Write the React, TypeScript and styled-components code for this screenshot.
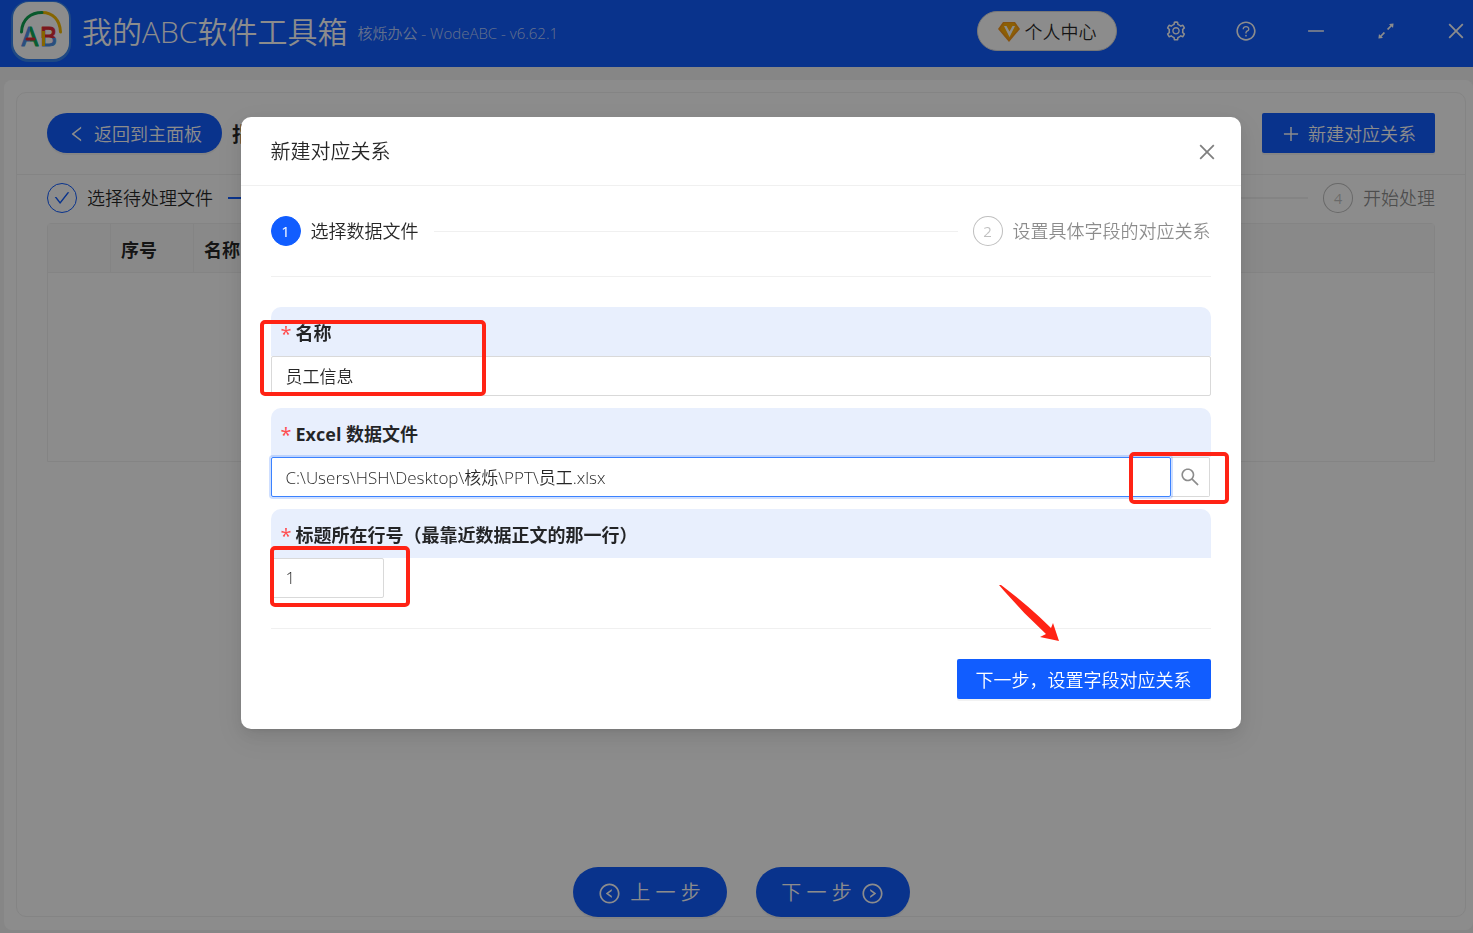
import React from "react";
import styled, { createGlobalStyle, css } from "styled-components";
import {
  AiOutlineArrowsAlt,
  AiOutlineCheck,
  AiOutlineClose,
  AiOutlineLeft,
  AiOutlineLeftCircle,
  AiOutlineMinus,
  AiOutlinePlus,
  AiOutlineQuestionCircle,
  AiOutlineRightCircle,
  AiOutlineSearch,
  AiOutlineSetting,
} from "react-icons/ai";

const primary = "#115dff";
const line = "#f0f0f0";
const annotation = "#ff2315";

const GlobalStyle = createGlobalStyle`
  *, *::before, *::after { box-sizing: border-box; }
  body {
    margin: 0;
    background: #f5f5f5;
    color: rgba(0, 0, 0, 0.85);
    font-family: "Open Sans", "Noto Sans CJK SC", sans-serif;
    font-weight: 350;
    font-size: 18px;
    line-height: 28px;
  }
  button, input { font: inherit; color: inherit; }
  button { cursor: pointer; }
  h1, h2, p { margin: 0; font-weight: inherit; }
  svg { display: block; flex: none; }
`;

const Page = styled.div`
  display: flex;
  flex-direction: column;
  min-height: 100vh;
`;

const TitleBar = styled.header`
  display: flex;
  align-items: center;
  height: 67px;
  padding: 0 6px 5px 11px;
  background: ${primary};
  color: #fff;
`;

const AppName = styled.h1`
  margin-left: 10px;
  padding-top: 2px;
  font-size: 30px;
  line-height: 40px;
  white-space: nowrap;
`;

const Version = styled.span`
  margin: 4px 0 0 10px;
  font-size: 15px;
  line-height: 24px;
  color: rgba(255, 255, 255, 0.7);
  white-space: nowrap;
`;

const WindowTools = styled.div`
  display: flex;
  align-items: center;
  gap: 48px;
  margin-left: auto;
`;

const IconButton = styled.button`
  display: flex;
  padding: 0;
  border: 0;
  background: none;
  font-size: 22px;
`;

const AccountButton = styled.button`
  display: flex;
  align-items: center;
  justify-content: center;
  gap: 5px;
  width: 140px;
  height: 40px;
  padding: 2px 0 0;
  border: 1px solid #d9d9d9;
  border-radius: 20px;
  background: #fff;
  color: rgba(0, 0, 0, 0.85);
`;

const Workspace = styled.main`
  flex: 1;
  display: flex;
  margin: 13px 0 3px 4px;
  padding: 12px 7px 13px 12px;
  border-radius: 8px;
  background: #fff;
`;

const Card = styled.section`
  flex: 1;
  display: flex;
  flex-direction: column;
  min-width: 0;
  border: 1px solid ${line};
  border-radius: 10px;
`;

const CardHeader = styled.div`
  display: flex;
  align-items: center;
  gap: 10px;
  padding: 20px 30px 21px;
  border-bottom: 1px solid ${line};
`;

const PageTitle = styled.h2`
  flex: 1;
  padding-top: 4px;
  font-weight: 700;
  font-size: 20px;
`;

const Button = styled.button<{ $shape?: "pill" | "large" }>`
  display: inline-flex;
  align-items: center;
  justify-content: center;
  gap: 7px;
  height: 40px;
  padding: 2px 19px 0;
  border: 0;
  border-radius: 2px;
  background: ${primary};
  color: #fff;
  box-shadow: 0 2px 0 rgba(0, 0, 0, 0.05);
  white-space: nowrap;
  svg { font-size: 20px; }
  ${({ $shape }) =>
    $shape &&
    css`
      padding: 2px 20px 0;
      border-radius: 25px;
    `}
  ${({ $shape }) =>
    $shape === "large" &&
    css`
      width: 154px;
      height: 50px;
      font-size: 20px;
      gap: 9px;
      svg { font-size: 23px; }
    `}
`;

const StepRow = styled.ol<{ $compact?: boolean }>`
  display: flex;
  align-items: center;
  gap: 15px;
  margin: 0;
  padding: ${({ $compact }) => ($compact ? "8px 30px 10px" : "0 0 30px")};
  list-style: none;
  ${({ $compact }) => !$compact && css`border-bottom: 1px solid ${line};`}
`;

const StepItem = styled.li<{ $waiting?: boolean }>`
  display: flex;
  align-items: center;
  gap: 10px;
  white-space: nowrap;
  color: ${({ $waiting }) => ($waiting ? "rgba(0,0,0,0.45)" : "rgba(0,0,0,0.85)")};
`;

const StepMark = styled.span<{ $state: "done" | "active" | "wait" }>`
  display: flex;
  align-items: center;
  justify-content: center;
  width: 30px;
  height: 30px;
  border: 1px solid ${({ $state }) => ($state === "wait" ? "rgba(0,0,0,0.25)" : primary)};
  border-radius: 50%;
  font-size: 15px;
  font-weight: 400;
  background: ${({ $state }) => ($state === "active" ? primary : "#fff")};
  color: ${({ $state }) =>
    $state === "active" ? "#fff" : $state === "done" ? primary : "rgba(0,0,0,0.25)"};
`;

const StepLine = styled.li<{ $done?: boolean; $thick?: boolean }>`
  flex: 1;
  height: ${({ $thick }) => ($thick ? 2 : 1)}px;
  background: ${({ $done }) => ($done ? primary : line)};
`;

const TableFrame = styled.div`
  height: 239px;
  margin: 0 30px;
  border: 1px solid ${line};
  border-radius: 4px 4px 0 0;
`;

const Table = styled.table`
  width: 100%;
  table-layout: fixed;
  border-collapse: separate;
  border-spacing: 0;
`;

const HeadCell = styled.th<{ $width?: number }>`
  width: ${({ $width }) => ($width ? `${$width}px` : "auto")};
  height: 49px;
  padding: 4px 10px 0;
  border-right: 1px solid ${line};
  border-bottom: 1px solid ${line};
  background: #fafafa;
  text-align: left;
  font-weight: 700;
  &:last-child { border-right: 0; }
`;

const Pager = styled.nav`
  display: flex;
  justify-content: center;
  gap: 29px;
  margin: auto 0 -1px;
`;

const Mask = styled.div`
  position: fixed;
  inset: 0;
  display: flex;
  align-items: flex-start;
  justify-content: center;
  padding: 117px 0 0 8px;
  background: rgba(0, 0, 0, 0.45);
`;

const Dialog = styled.section`
  position: relative;
  width: 1000px;
  border-radius: 10px;
  background: #fff;
  box-shadow: 0 3px 6px -4px rgba(0, 0, 0, 0.12), 0 6px 16px rgba(0, 0, 0, 0.08),
    0 9px 28px 8px rgba(0, 0, 0, 0.05);
`;

const DialogHeader = styled.header`
  display: flex;
  align-items: center;
  justify-content: space-between;
  height: 69px;
  padding: 2px 23px 0 30px;
  border-bottom: 1px solid ${line};
  font-size: 20px;
  ${IconButton} { color: rgba(0, 0, 0, 0.5); }
`;

const DialogBody = styled.form`
  padding: 30px;
`;

const Fields = styled.div`
  display: flex;
  flex-direction: column;
  gap: 12px;
  padding: 30px 0;
  border-bottom: 1px solid ${line};
`;

const Label = styled.label`
  display: flex;
  align-items: center;
  gap: 4px;
  height: 49px;
  padding: 3px 10px 0;
  border-radius: 10px 10px 0 0;
  background: #e8effd;
  font-weight: 700;
`;

const Required = styled.span`
  padding-top: 2px;
  color: #ff4d4f;
  font-size: 20px;
  font-weight: 400;
`;

const Input = styled.input<{ $active?: boolean; $width?: number }>`
  display: block;
  width: ${({ $width }) => ($width ? `${$width}px` : "100%")};
  height: 40px;
  padding: 0 14px 2px;
  border: 1px solid #d9d9d9;
  border-radius: 2px;
  background: #fff;
  outline: 0;
  font-size: 17px;
  ${({ $active }) =>
    $active &&
    css`
      z-index: 1;
      border-color: #3b82ff;
      box-shadow: 0 0 0 2px rgba(17, 93, 255, 0.2);
    `}
`;

const FileRow = styled.div`
  display: flex;
  padding-right: 1px;
`;

const SearchButton = styled.button`
  display: flex;
  align-items: center;
  justify-content: center;
  flex: none;
  width: 39px;
  height: 40px;
  padding: 0;
  border: 1px solid #d9d9d9;
  border-left: 0;
  border-radius: 0 2px 2px 0;
  background: #fff;
  color: rgba(0, 0, 0, 0.45);
  font-size: 22px;
`;

const DialogFooter = styled.footer`
  display: flex;
  justify-content: flex-end;
  padding-top: 30px;
`;

const Marks = styled.svg`
  position: absolute;
  top: 0;
  left: 0;
  z-index: 2;
  pointer-events: none;
`;

function Logo() {
  return (
    <svg width="61" height="61" viewBox="0 0 61 61" aria-label="AB">
      <defs>
        <linearGradient id="a">
          <stop offset="0.5" stopColor="#4c8fe6" />
          <stop offset="0.5" stopColor="#0fa958" />
        </linearGradient>
        <linearGradient id="b" x2="0" y2="1">
          <stop offset="0.55" stopColor="#e02a35" />
          <stop offset="0.55" stopColor="#4c8fe6" />
        </linearGradient>
      </defs>
      <rect width="60" height="61" rx="18" fill="#3a86f0" />
      <rect x="2" y="1" width="56" height="57" rx="16" fill="#fff" />
      <g fill="none" strokeWidth="3" strokeLinecap="round">
        <path d="M31 11.500C42 11.500 49 19 49.500 31" stroke="#f5b800" />
        <path d="M10.500 31C11 18 20 11.500 31 11.500" stroke="#10a050" />
      </g>
      <g fontFamily="Inter, sans-serif" fontWeight="400" fontSize="26" strokeWidth="1" strokeLinejoin="round">
        <text x="10" y="45" fill="url(#a)" stroke="url(#a)">A</text>
        <text x="29" y="45" fill="url(#b)" stroke="url(#b)">B</text>
      </g>
      <path d="M16 38H23" stroke="#e02a35" strokeWidth="3" strokeLinecap="round" />
      <path d="M32.500 30V45" stroke="#f5b800" strokeWidth="3" />
    </svg>
  );
}

function Diamond() {
  return (
    <svg width="22" height="20" viewBox="0 0 22 20" aria-hidden="true">
      <path d="M5 0H17L22 7L11 20L0 7Z" fill="#f5971c" />
      <path d="M6 1H16L20 7L11 17L2 7Z" fill="#ffae0a" />
      <path d="M6 4L11.500 15L17 4H14.500L11.500 9.500L8.500 4Z" fill="#fff" />
    </svg>
  );
}

const boxes = [
  { x: 21, y: 205, w: 222, h: 72 },
  { x: 890, y: 337, w: 96, h: 48 },
  { x: 31, y: 431, w: 136, h: 57 },
];

export default function App() {
  return (
    <>
      <GlobalStyle />
      <Page>
        <TitleBar>
          <Logo />
          <AppName>我的ABC软件工具箱</AppName>
          <Version>核烁办公 - WodeABC - v6.62.1</Version>
          <WindowTools>
            <AccountButton><Diamond />个人中心</AccountButton>
            <IconButton aria-label="设置"><AiOutlineSetting /></IconButton>
            <IconButton aria-label="帮助"><AiOutlineQuestionCircle /></IconButton>
            <IconButton aria-label="最小化"><AiOutlineMinus /></IconButton>
            <IconButton aria-label="最大化"><AiOutlineArrowsAlt /></IconButton>
            <IconButton aria-label="关闭"><AiOutlineClose /></IconButton>
          </WindowTools>
        </TitleBar>
        <Workspace>
          <Card>
            <CardHeader>
              <Button $shape="pill"><AiOutlineLeft />返回到主面板</Button>
              <PageTitle>指</PageTitle>
              <Button><AiOutlinePlus />新建对应关系</Button>
            </CardHeader>
            <StepRow $compact>
              <StepItem><StepMark $state="done"><AiOutlineCheck size={18} /></StepMark>选择待处理文件</StepItem>
              <StepLine $done $thick />
              <StepLine $thick />
              <StepItem $waiting><StepMark $state="wait">4</StepMark>开始处理</StepItem>
            </StepRow>
            <TableFrame>
              <Table>
                <thead>
                  <tr>
                    <HeadCell $width={63} />
                    <HeadCell $width={83}>序号</HeadCell>
                    <HeadCell>名称</HeadCell>
                  </tr>
                </thead>
              </Table>
            </TableFrame>
            <Pager>
              <Button $shape="large"><AiOutlineLeftCircle />上 一 步</Button>
              <Button $shape="large">下 一 步<AiOutlineRightCircle /></Button>
            </Pager>
          </Card>
        </Workspace>
      </Page>
      <Mask>
        <Dialog role="dialog" aria-modal="true" aria-labelledby="dialog-title">
          <DialogHeader>
            <p id="dialog-title">新建对应关系</p>
            <IconButton aria-label="关闭"><AiOutlineClose /></IconButton>
          </DialogHeader>
          <DialogBody onSubmit={(e) => e.preventDefault()}>
            <StepRow>
              <StepItem><StepMark $state="active">1</StepMark>选择数据文件</StepItem>
              <StepLine />
              <StepItem $waiting><StepMark $state="wait">2</StepMark>设置具体字段的对应关系</StepItem>
            </StepRow>
            <Fields>
              <div>
                <Label htmlFor="name"><Required>*</Required>名称</Label>
                <Input id="name" defaultValue="员工信息" />
              </div>
              <div>
                <Label htmlFor="file"><Required>*</Required>Excel 数据文件</Label>
                <FileRow>
                  <Input id="file" $active defaultValue={"C:\\Users\\HSH\\Desktop\\核烁\\PPT\\员工.xlsx"} />
                  <SearchButton type="button" aria-label="浏览"><AiOutlineSearch /></SearchButton>
                </FileRow>
              </div>
              <div>
                <Label htmlFor="row"><Required>*</Required>标题所在行号（最靠近数据正文的那一行）</Label>
                <Input id="row" $width={113} defaultValue="1" />
              </div>
            </Fields>
            <DialogFooter>
              <Button type="submit">下一步，设置字段对应关系</Button>
            </DialogFooter>
          </DialogBody>
          <Marks width="1000" height="612" aria-hidden="true">
            {boxes.map((b) => (
              <rect key={b.y} x={b.x} y={b.y} width={b.w} height={b.h} rx="3" fill="none" stroke={annotation} strokeWidth="4" />
            ))}
            <path d="M758 468H760Q788 489 810 511L812 506L818 524L799 520L805 517Q780 494 758 468Z" fill={annotation} />
          </Marks>
        </Dialog>
      </Mask>
    </>
  );
}
